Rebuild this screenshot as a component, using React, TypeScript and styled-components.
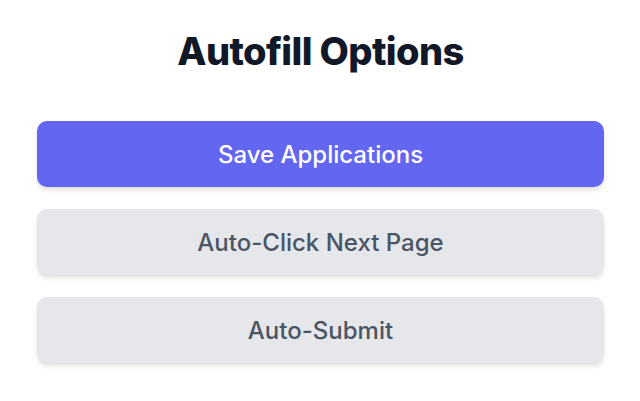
import React from "react";
import styled, { createGlobalStyle } from "styled-components";

const Global = createGlobalStyle`
  html, body { margin: 0; padding: 0; background: #ffffff; }
  body { font-family: Inter, "Noto Sans", sans-serif; }
`;

const Page = styled.div`
  width: 640px;
  height: 401px;
  box-sizing: border-box;
  padding: 20px 36px 0 37px;
  display: flex;
  flex-direction: column;
  align-items: stretch;
`;

const Title = styled.h1`
  margin: 0 0 39px;
  text-align: center;
  font-size: 38px;
  line-height: 62px;
  font-weight: 800;
  color: #111827;
  letter-spacing: -0.6px;
`;

const List = styled.div`
  display: flex;
  flex-direction: column;
  gap: 22px;
`;

const Button = styled.button<{ $primary?: boolean }>`
  height: 66px;
  border: none;
  border-radius: 10px;
  font-family: Inter, "Noto Sans", sans-serif;
  font-size: 24px;
  font-weight: 500;
  background: ${(p) => (p.$primary ? "#6366f1" : "#e5e7eb")};
  color: ${(p) => (p.$primary ? "#ffffff" : "#4b5563")};
  box-shadow: 0 4px 6px -1px rgba(0, 0, 0, 0.1), 0 2px 4px -2px rgba(0, 0, 0, 0.1);
  cursor: pointer;
`;

export default function App() {
  return (
    <>
      <Global />
      <Page>
        <Title>Autofill Options</Title>
        <List>
          <Button $primary>Save Applications</Button>
          <Button>Auto-Click Next Page</Button>
          <Button>Auto-Submit</Button>
        </List>
      </Page>
    </>
  );
}
